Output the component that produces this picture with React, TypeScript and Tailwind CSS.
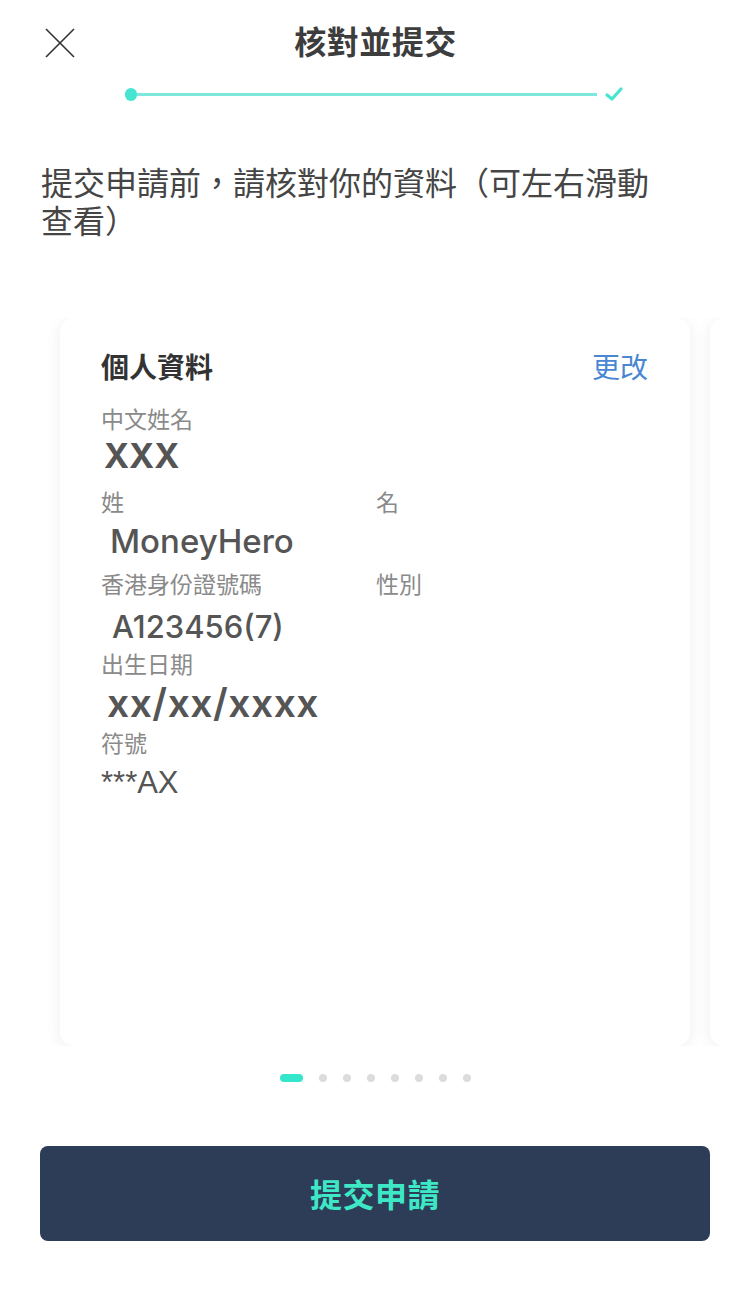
import { Fragment } from 'react';

const CJK = '"Noto Sans CJK TC", "Noto Sans", sans-serif';
const LATIN = '"Liberation Sans", "Noto Sans CJK TC", Arial, sans-serif';
const INTER = 'Inter, "Liberation Sans", "Noto Sans CJK TC", sans-serif';

export default function App() {
  return (
    <div className="min-h-screen w-[749px] bg-white overflow-hidden" style={{ fontFamily: CJK }}>
      {/* Header */}
      <header className="relative h-[84px] flex items-center justify-center">
        <button className="absolute left-[45px] top-[28px] w-[30px] h-[30px] text-[#333]">
          <svg viewBox="0 0 30 30" className="w-full h-full" fill="none" stroke="currentColor" strokeWidth="1.6">
            <path d="M1 1 L29 29 M29 1 L1 29" />
          </svg>
        </button>
        <h1 className="-mt-[4px] pl-[2px] text-[32px] leading-[36px] font-bold text-[#3d3d3d] tracking-[0.5px]">核對並提交</h1>
      </header>

      {/* Progress */}
      <div className="h-[20px] flex items-center pl-[125px] w-[624px]">
        <span className="w-[12px] h-[13px] rounded-full bg-[#46e5d2] shrink-0" />
        <span className="flex-1 h-[3px] bg-[#7ce9dc]" />
        <svg viewBox="0 0 20 16" className="w-[20px] h-[16px] ml-[7px] shrink-0" fill="none" stroke="#46e5d2" strokeWidth="3.2" strokeLinecap="round" strokeLinejoin="round">
          <path d="M3 9 L8 13 L17 3" />
        </svg>
      </div>

      {/* Intro */}
      <p className="mt-[58px] ml-[41px] w-[630px] text-[32px] leading-[38px] text-[#454545]">
        提交申請前，請核對你的資料（可左右滑動查看）
      </p>

      {/* Carousel */}
      <div className="mt-[80px] flex gap-[20px] pl-[60px] overflow-hidden">
        <PersonalCard />
        <div className="w-[630px] h-[728px] shrink-0 bg-white rounded-[14px] shadow-[0_2px_16px_rgba(0,0,0,0.07)]" />
      </div>

      {/* Dots */}
      <div className="mt-[28px] flex justify-center gap-4 pl-[1px]">
        <span className="w-[23px] h-[8px] rounded-full bg-[#33e6cc]" />
        {[0, 1, 2, 3, 4, 5, 6].map((i) => (
          <span key={i} className="w-[8px] h-[8px] rounded-full bg-[#dcdcdc]" />
        ))}
      </div>

      {/* Submit */}
      <button className="mt-[64px] mx-[40px] w-[670px] h-[95px] rounded-[8px] bg-[#2d3c57] flex items-center justify-center">
        <span className="-mt-[2px] text-[32px] font-bold text-[#3ee8c6] tracking-[0.5px]">提交申請</span>
      </button>
    </div>
  );
}

function PersonalCard() {
  return (
    <div className="w-[630px] h-[728px] shrink-0 bg-white rounded-[14px] shadow-[0_2px_16px_rgba(0,0,0,0.07)] pt-[32px] pl-[41px] pr-[42px]">
      <div className="h-[32px] flex items-center justify-between">
        <h2 className="text-[28px] leading-[32px] font-bold text-[#333]">個人資料</h2>
        <span className="text-[28px] leading-[32px] text-[#4a87d3]">更改</span>
      </div>

      <Label className="mt-[22px]">中文姓名</Label>
      <div className="mt-[4px] h-[40px] leading-[40px] pl-[3px] text-[34px] font-bold text-[#555]" style={{ fontFamily: INTER }}>
        XXX
      </div>

      <div className="mt-[11px] grid grid-cols-[275px_1fr]">
        <Label>姓</Label>
        <Label>名</Label>
      </div>
      <div className="mt-[6px] h-[40px] leading-[40px] pl-[9px] text-[33px] font-medium text-[#555]" style={{ fontFamily: INTER }}>
        MoneyHero
      </div>

      <div className="mt-[8px] grid grid-cols-[275px_1fr]">
        <Label>香港身份證號碼</Label>
        <Label>性別</Label>
      </div>
      <div className="mt-[10px] h-[40px] leading-[40px] pl-[11px] text-[31px] font-medium text-[#555]" style={{ fontFamily: INTER }}>
        A123456(7)
      </div>

      <Label className="mt-[2px]">出生日期</Label>
      <div className="mt-[6px] h-[40px] leading-[40px] pl-[6px] text-[39px] font-semibold tracking-[0.5px] text-[#555]" style={{ fontFamily: INTER }}>
        xx/xx/xxxx
      </div>

      <Label className="mt-[5px]">符號</Label>
      <div className="mt-[9px] h-[36px] leading-[36px] text-[31px] text-[#555]" style={{ fontFamily: LATIN }}>
        ***AX
      </div>
    </div>
  );
}

function Label({ children, className = '' }: { children: React.ReactNode; className?: string }) {
  return (
    <Fragment>
      <div className={`h-[28px] leading-[28px] text-[23px] text-[#8a8a8a] ${className}`}>{children}</div>
    </Fragment>
  );
}
